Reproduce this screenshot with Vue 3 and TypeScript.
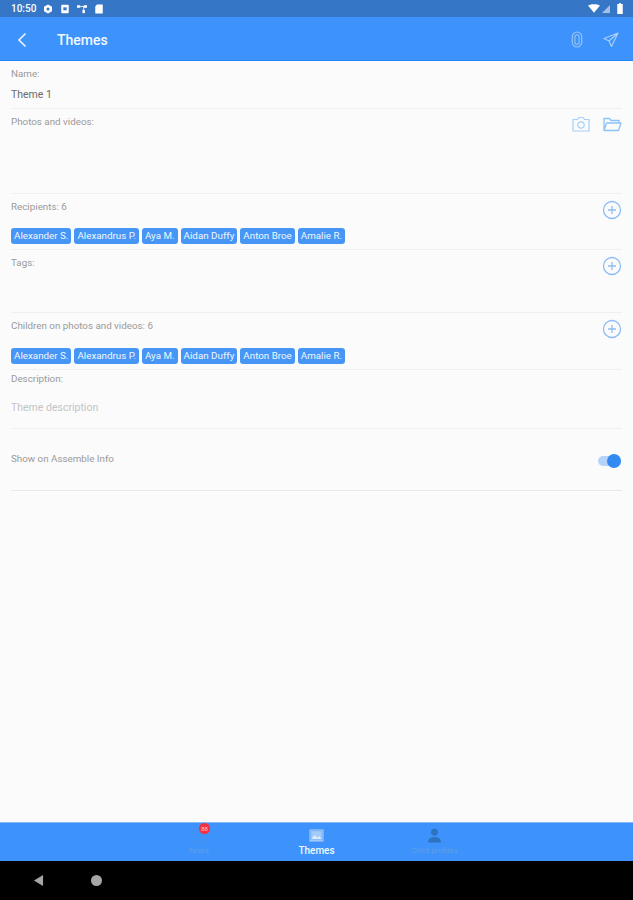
<template>
  <div class="screen">
    <div class="status-bar">
      <span class="time">10:50</span>
      <svg class="st-icon" viewBox="0 0 12 12"><path d="M6 .5l4.8 2.7v5.6L6 11.5 1.200 8.800V3.200z" fill="#fff" /><circle cx="6" cy="6" r="1.800" fill="#3577c6" /></svg>
      <svg class="st-icon" viewBox="0 0 12 12"><rect x="1.500" y="1" width="9" height="10" rx="1" fill="#fff" /><rect x="4" y="4" width="4" height="3.500" fill="#3577c6" /></svg>
      <svg class="st-icon" viewBox="0 0 12 12"><rect x="0" y="1.500" width="4" height="3" fill="#fff" /><rect x="8" y="1.500" width="4" height="3" fill="#fff" /><rect x="6.500" y="7" width="3" height="4" fill="#fff" /><path d="M4 3h4M8 3L8 7" stroke="#fff" /></svg>
      <svg class="st-icon" viewBox="0 0 12 12"><path d="M3.500.5h7v11h-9V3z" fill="#fff" /></svg>
      <span class="status-right">
        <svg class="wifi" viewBox="0 0 14 10"><path d="M0 1.500C4-.5 10-.5 14 1.500L7 10z" fill="#fff" /></svg>
        <svg class="signal" viewBox="0 0 10 10"><path d="M10 0v10H0z" fill="#fff" fill-opacity=".55" /></svg>
        <svg class="battery" viewBox="0 0 6 12"><path d="M2 0h2v1h2v11H0V1h2z" fill="#fff" /></svg>
      </span>
    </div>

    <header class="app-bar">
      <svg class="back" viewBox="0 0 12 18"><path d="M9.500 2.500L3 9l6.500 6.500" fill="none" stroke="#e6f1fe" stroke-width="1.700" /></svg>
      <span class="title">Themes</span>
      <span class="bar-actions">
        <svg class="clip" viewBox="0 0 12 18"><rect x="1" y="1" width="10" height="16" rx="5" fill="none" stroke="#9cc6f8" stroke-width="1.200" /><rect x="3.800" y="4" width="4.400" height="10" rx="2.200" fill="none" stroke="#9cc6f8" stroke-width="1.100" /></svg>
        <svg class="send" viewBox="0 0 16 16"><path d="M15 1L1 6.500l5 2.500 2.500 5.500zM6 9l9-8" fill="none" stroke="#a9cdf8" stroke-width="1.200" stroke-linejoin="round" /></svg>
      </span>
    </header>

    <main class="form">
      <section class="field field-name">
        <div class="label">Name:</div>
        <div class="value">Theme 1</div>
      </section>

      <section class="field field-media">
        <div class="label">Photos and videos:</div>
        <span class="media-actions">
          <svg class="cam" viewBox="0 0 18 16"><path d="M1 3.500h4.500L7 1.500h4l1.500 2H17v11.500H1z" fill="none" stroke="#a5d0f8" stroke-width="1.200" stroke-linejoin="round" /><circle cx="9" cy="9" r="3.200" fill="none" stroke="#a5d0f8" stroke-width="1.200" /></svg>
          <svg class="folder" viewBox="0 0 19 15"><path d="M1 13.500V1.500h5.500l1.500 2h8v2.500M1 13.500h14.500L18 6H3.500z" fill="none" stroke="#8cc3f7" stroke-width="1.300" stroke-linejoin="round" /></svg>
        </span>
      </section>

      <section class="field field-people">
        <div class="label">Recipients: 6</div>
        <svg class="plus" viewBox="0 0 20 20"><circle cx="10" cy="10" r="8.500" fill="none" stroke="#8fbdf5" stroke-width="1.300" /><path d="M10 6v8M6 10h8" stroke="#8fbdf5" stroke-width="1.300" /></svg>
        <div class="chips">
          <span v-for="name in people" :key="name" class="chip">{{ name }}</span>
        </div>
      </section>

      <section class="field field-tags">
        <div class="label">Tags:</div>
        <svg class="plus" viewBox="0 0 20 20"><circle cx="10" cy="10" r="8.500" fill="none" stroke="#8fbdf5" stroke-width="1.300" /><path d="M10 6v8M6 10h8" stroke="#8fbdf5" stroke-width="1.300" /></svg>
      </section>

      <section class="field field-people">
        <div class="label">Children on photos and videos: 6</div>
        <svg class="plus" viewBox="0 0 20 20"><circle cx="10" cy="10" r="8.500" fill="none" stroke="#8fbdf5" stroke-width="1.300" /><path d="M10 6v8M6 10h8" stroke="#8fbdf5" stroke-width="1.300" /></svg>
        <div class="chips">
          <span v-for="name in people" :key="name" class="chip">{{ name }}</span>
        </div>
      </section>

      <section class="field field-desc">
        <div class="label">Description:</div>
        <div class="value placeholder">Theme description</div>
      </section>

      <section class="field field-switch">
        <div class="label">Show on Assemble Info</div>
        <span class="switch"><span class="knob"></span></span>
      </section>
    </main>

    <nav class="tab-bar">
      <div class="tab">
        <span class="tab-icon">
          <svg viewBox="0 0 14 16"><path d="M1.500 1h11v14h-11z" fill="none" stroke="#4d8fdc" stroke-width="1" /></svg>
          <span class="badge">88</span>
        </span>
        <span class="tab-label">Tasks</span>
      </div>
      <div class="tab tab-active">
        <span class="tab-icon">
          <svg viewBox="0 0 16 14"><rect x=".5" y=".5" width="15" height="13" fill="#a3cbf9" /><path d="M2 11.500l4-5 3 3 2-2 3 4z" fill="#dcebfd" /><rect x="2" y="2" width="12" height="9.500" fill="none" stroke="#5ea4f7" stroke-width=".7" /></svg>
        </span>
        <span class="tab-label">Themes</span>
      </div>
      <div class="tab">
        <span class="tab-icon">
          <svg viewBox="0 0 14 14"><circle cx="7" cy="4" r="3.200" fill="#2f72bf" /><path d="M1 13.500c0-3.500 2.500-5 6-5s6 1.500 6 5z" fill="#2f72bf" /></svg>
        </span>
        <span class="tab-label">Child profiles</span>
      </div>
    </nav>

    <div class="nav-bar">
      <svg class="nav-back" viewBox="0 0 12 14"><path d="M11 1v12L1 7z" fill="#a6a6a6" /></svg>
      <span class="nav-home"></span>
    </div>
  </div>
</template>

<script setup lang="ts">
const people: string[] = [
  'Alexander S.',
  'Alexandrus P.',
  'Aya M.',
  'Aidan Duffy',
  'Anton Broe',
  'Amalie R.'
]
</script>

<style>
body {
  margin: 0;
}
</style>

<style scoped>
.screen {
  width: 633px;
  height: 900px;
  display: flex;
  flex-direction: column;
  overflow: hidden;
  background: #fbfbfb;
  font-family: Roboto, "Liberation Sans", sans-serif;
}

.status-bar {
  height: 17px;
  flex: none;
  display: flex;
  align-items: center;
  gap: 7px;
  padding: 0 7px 0 11px;
  background: #3577c6;
  color: #fff;
  font-size: 10px;
  font-weight: 500;
}

.st-icon {
  width: 10px;
  height: 10px;
}

.status-right {
  margin-left: auto;
  display: flex;
  align-items: center;
  gap: 2px;
}

.wifi {
  width: 12px;
  height: 9px;
}

.signal {
  width: 8px;
  height: 8px;
  margin-right: 5px;
}

.battery {
  width: 6px;
  height: 11px;
  margin-right: 3px;
}

.app-bar {
  height: 44px;
  flex: none;
  display: flex;
  align-items: center;
  padding: 2px 14px 0 16px;
  background: #3d93fb;
  border-bottom: 1px solid #1f86f5;
  box-sizing: border-box;
}

.back {
  width: 12px;
  height: 18px;
}

.title {
  margin-left: 29px;
  color: #f2f8ff;
  font-size: 14px;
  font-weight: 500;
}

.bar-actions {
  margin-left: auto;
  display: flex;
  align-items: center;
  gap: 20px;
}

.clip {
  width: 12px;
  height: 17px;
}

.send {
  width: 16px;
  height: 16px;
}

.form {
  flex: 1;
  padding: 0 11px;
}

.field {
  position: relative;
  box-sizing: border-box;
  border-bottom: 1px solid #f0f0f0;
}

.field-name {
  height: 48px;
}

.field-media {
  height: 85px;
}

.field-people {
  display: flex;
  flex-direction: column;
  justify-content: space-between;
  padding-bottom: 5px;
}

.field-people:nth-child(3) {
  height: 56px;
}

.field-people:nth-child(5) {
  height: 57px;
}

.field-tags {
  height: 63px;
}

.field-desc {
  height: 59px;
}

.field-switch {
  height: 62px;
  padding-top: 24px;
  border-bottom-color: #e9e9e9;
}

.label {
  padding-top: 7px;
  color: #9a9a9a;
  font-size: 9.800px;
  line-height: 11px;
}

.field-desc .label {
  padding-top: 3px;
}

.field-switch .label {
  padding-top: 0;
}

.value {
  margin-top: 10px;
  color: #6a6a6a;
  font-size: 10.500px;
  line-height: 12px;
}

.placeholder {
  margin-top: 18px;
  color: #c4c4c4;
}

.media-actions {
  position: absolute;
  top: 7px;
  right: 0;
  display: flex;
  align-items: center;
  gap: 13px;
}

.cam {
  width: 18px;
  height: 16px;
}

.folder {
  width: 19px;
  height: 15px;
}

.plus {
  position: absolute;
  top: 6px;
  right: 0;
  width: 20px;
  height: 20px;
}

.chips {
  display: flex;
  gap: 3px;
}

.chip {
  height: 16px;
  padding: 0 3px;
  border-radius: 3px;
  background: #4796f6;
  color: #eef6ff;
  font-size: 9.800px;
  line-height: 16px;
  white-space: nowrap;
}

.switch {
  position: absolute;
  top: 27px;
  right: 1px;
  width: 23px;
  height: 10px;
  border-radius: 5px;
  background: #b5d4fa;
}

.knob {
  position: absolute;
  top: -2px;
  right: 0;
  width: 14px;
  height: 14px;
  border-radius: 50%;
  background: #3389f2;
}

.tab-bar {
  height: 39px;
  flex: none;
  display: flex;
  justify-content: center;
  background: #3d93fb;
  border-top: 1px solid #82b6f5;
  box-sizing: border-box;
}

.tab {
  width: 118px;
  display: flex;
  flex-direction: column;
  align-items: center;
  padding-top: 5px;
  color: #5f9fe8;
  font-size: 8px;
}

.tab-active {
  color: #f2f8ff;
  font-size: 10px;
  font-weight: 500;
}

.tab-icon {
  position: relative;
  height: 15px;
  display: flex;
}

.tab-icon svg {
  width: 15px;
  height: 15px;
}

.tab-label {
  margin-top: 2px;
  line-height: 11px;
}

.badge {
  position: absolute;
  top: -5px;
  left: 8px;
  width: 11px;
  height: 11px;
  border-radius: 50%;
  background: #f7303f;
  color: #ffc9c9;
  font-size: 6px;
  font-weight: 400;
  line-height: 11px;
  text-align: center;
}

.nav-bar {
  height: 39px;
  flex: none;
  display: flex;
  align-items: center;
  padding-left: 33px;
  gap: 47px;
  background: #000;
}

.nav-back {
  width: 11px;
  height: 13px;
}

.nav-home {
  width: 11px;
  height: 11px;
  border-radius: 50%;
  background: #a6a6a6;
}
</style>
